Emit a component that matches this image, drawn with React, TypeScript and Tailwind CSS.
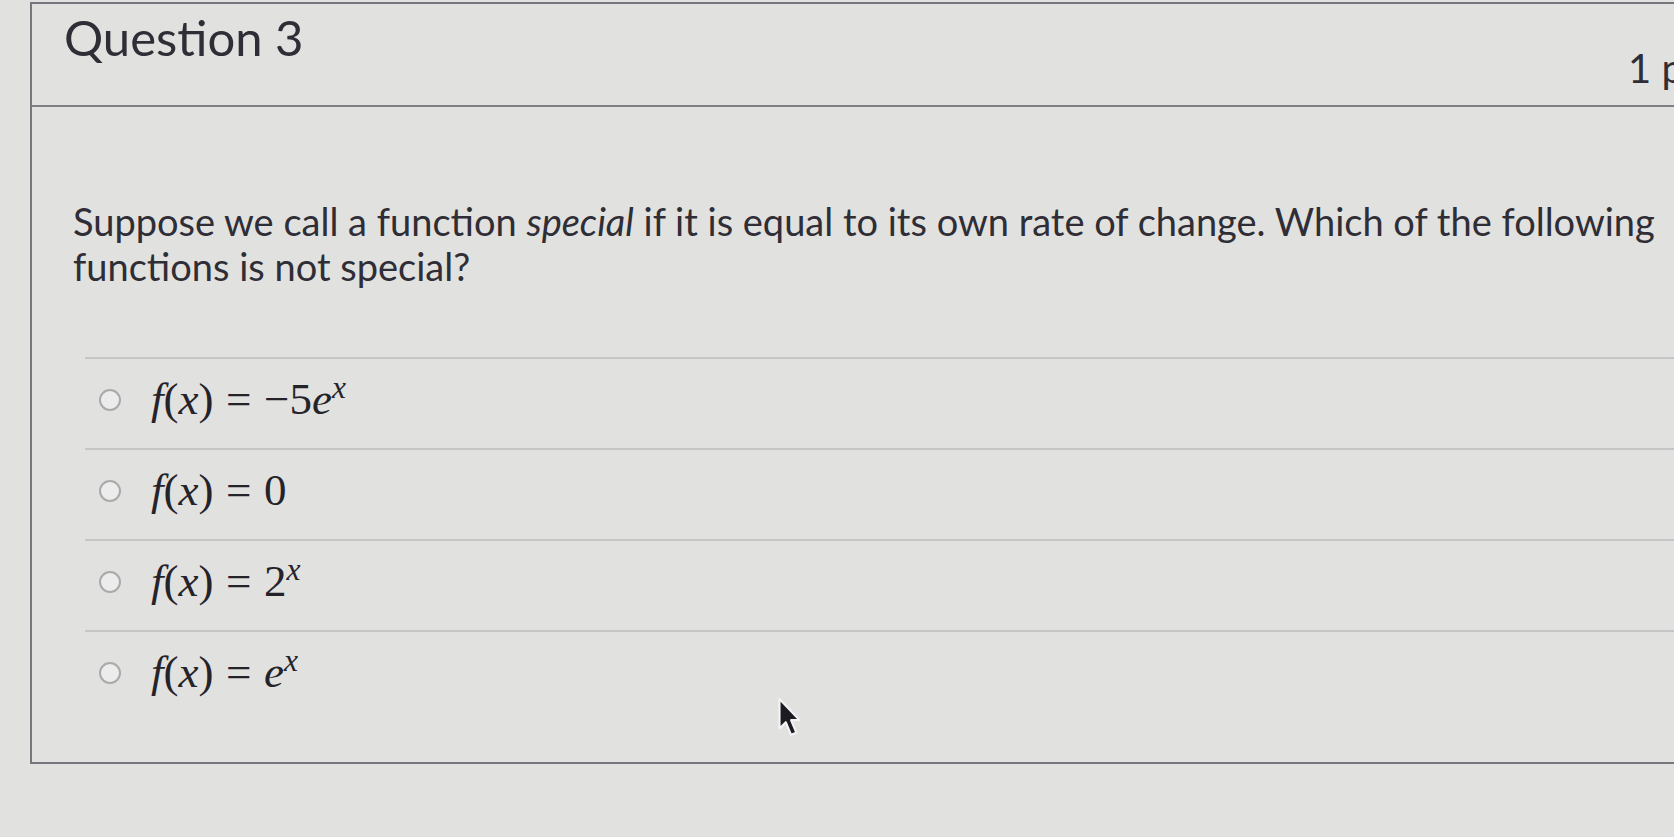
import type { ReactNode } from 'react'

const options: ReactNode[] = [
  <>
    <i>f</i>(<i>x</i>)<span className="mx-[0.28em]">=</span>−5<i>e</i>
    <sup className="text-[0.7em] italic">x</sup>
  </>,
  <>
    <i>f</i>(<i>x</i>)<span className="mx-[0.28em]">=</span>0
  </>,
  <>
    <i>f</i>(<i>x</i>)<span className="mx-[0.28em]">=</span>2
    <sup className="text-[0.7em] italic">x</sup>
  </>,
  <>
    <i>f</i>(<i>x</i>)<span className="mx-[0.28em]">=</span>
    <i>e</i>
    <sup className="text-[0.7em] italic">x</sup>
  </>,
]

function Cursor() {
  return (
    <svg
      className="absolute left-[776px] top-[697px]"
      width="28"
      height="42"
      viewBox="0 0 26 40"
    >
      <path
        d="M3 2 L3 30 L9 24 L14 36 L19 34 L14 22 L22 22 Z"
        fill="#1d1b22"
        stroke="#f4f4f4"
        strokeWidth="2"
        strokeLinejoin="round"
      />
    </svg>
  )
}

export default function App() {
  return (
    <div
      className="relative w-full h-[837px] overflow-hidden bg-[#e1e1df] text-[#2f2d35]"
      style={{ fontFamily: 'Lato, "Open Sans", sans-serif' }}
    >
      <div className="ml-[30px] mt-[2px] w-[1720px] h-[762px] border-2 border-[#77767c]">
        {/* Header */}
        <div className="flex h-[103px] border-b-2 border-[#7f7d85]">
          <h2 className="w-[1596px] shrink-0 pl-[32px] pt-[9px] text-[49px] leading-none whitespace-nowrap">
            Question 3
          </h2>
          <div className="pt-[44px] text-[40px] leading-none whitespace-nowrap">1 pts</div>
        </div>

        {/* Body */}
        <div className="pl-[41px] pt-[92px] text-[38px] leading-[45px] whitespace-nowrap">
          Suppose we call a function <i>special</i> if it is equal to its own rate of change. Which of
          the following
          <br />
          functions is not special?
        </div>

        <div className="ml-[53px] mt-[68px]">
          {options.map((opt, i) => (
            <div
              key={i}
              className="flex h-[91px] items-center pb-[8px] border-t-2 border-[#c6c6c6]"
            >
              <span className="ml-[14px] w-[22px] h-[22px] rounded-full border-2 border-[#aaaaaa] bg-[#ececec] shrink-0" />
              <span
                className="ml-[30px] text-[45px] leading-none whitespace-nowrap text-[#25232a]"
                style={{ fontFamily: '"Liberation Serif", "Times New Roman", serif' }}
              >
                {opt}
              </span>
            </div>
          ))}
        </div>
      </div>
      <Cursor />
    </div>
  )
}
